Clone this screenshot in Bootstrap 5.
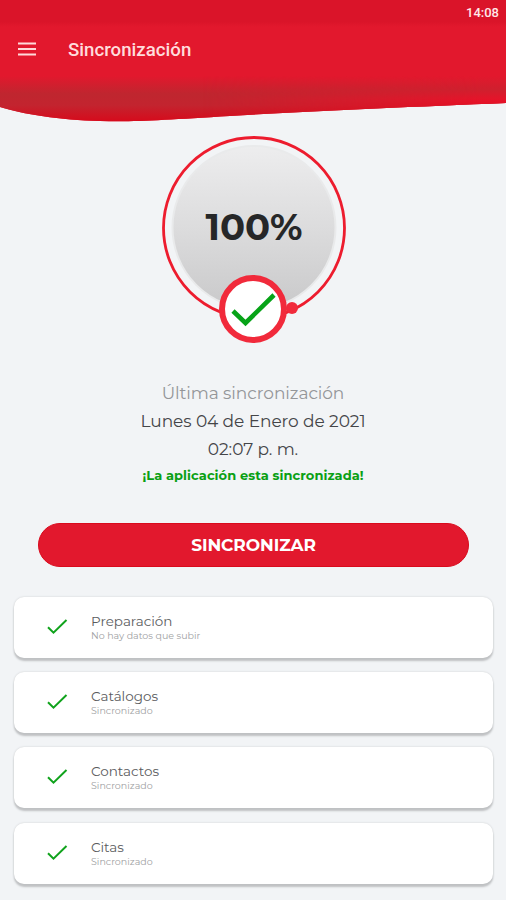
<!DOCTYPE html>
<html lang="es">
<head>
<meta charset="utf-8">
<meta name="viewport" content="width=device-width, initial-scale=1">
<title>Sincronización</title>
<link href="https://cdn.jsdelivr.net/npm/bootstrap@5.3.0/dist/css/bootstrap.min.css" rel="stylesheet">
<style>
  body { background: #f2f4f6; font-family: Montserrat, Inter, "Open Sans", sans-serif; height: 900px; overflow: hidden; }
  .app-header { height: 136px; font-family: Roboto, sans-serif; }
  .header-shape { z-index: 0; }
  .status-bar { height: 24px; padding-right: 7px; padding-top: 1px; font-size: 13px; font-weight: 500; color: #ffe9e9; }
  .app-bar { height: 52px; padding-left: 18px; gap: 32px; }
  .app-title { font-size: 18.7px; font-weight: 500; line-height: 24px; color: #ffdcdc; }
  .menu-icon { margin-top: -2px; }
  .gauge { width: 186px; height: 209px; }
  .gauge-value { top: 67px; left: 1px; font-size: 37px; line-height: 48px; font-weight: 700; color: #262728; letter-spacing: -.1px; }
  .sync-info { margin-top: 34px; font-size: 17px; line-height: 28.2px; color: #444548; letter-spacing: -.07px; }
  .info-label { color: #949699; }
  .info-ok { font-size: 13px; line-height: 22px; font-weight: 700; color: #0aa014; letter-spacing: .06px; }
  .btn-sync { margin: 37px 37px 0 38px; height: 44px; padding: 8px 0 6px; font-size: 17px; line-height: 1; font-weight: 700; color: #fff; background: #e2182d; border: 1px solid #d90a1c; letter-spacing: -.08px; }
  .task-list { margin: 30px 13px 0 14px; gap: 14.4px; }
  .task { height: 61px; border-radius: 10px; background: #fff; padding-left: 31px; box-shadow: 0 3px 2px #bfc1c3, 0 0 2px #c9cbcd; }
  .task-icon { margin-right: 22px; margin-top: -1px; }
  .task-name { font-size: 13.5px; line-height: 16px; color: #5b5c5e; }
  .task-state { font-size: 9.5px; line-height: 13px; color: #a0a1a3; }
</style>
</head>
<body class="d-flex flex-column">
<header class="app-header position-relative flex-shrink-0">
  <svg class="header-shape position-absolute top-0 start-0" width="506" height="130" viewBox="0 0 506 130" aria-hidden="true">
    <defs>
      <linearGradient id="top" x1="0" y1="0" x2="0" y2="1"><stop offset="0" stop-color="#da1429"/><stop offset=".18" stop-color="#da1429"/><stop offset=".22" stop-color="#e2182d"/><stop offset="1" stop-color="#e2182d"/></linearGradient>
      <linearGradient id="fold" x1="0" y1="76" x2="0" y2="121" gradientUnits="userSpaceOnUse"><stop offset="0" stop-color="#e2182d"/><stop offset=".4" stop-color="#bf262f"/><stop offset=".65" stop-color="#c3242f"/><stop offset="1" stop-color="#d60b1c"/></linearGradient>
      <linearGradient id="foldRight" x1="0" y1="76" x2="0" y2="110" gradientUnits="userSpaceOnUse"><stop offset="0" stop-color="#e2182d"/><stop offset=".4" stop-color="#cf202e"/><stop offset=".68" stop-color="#e5142a"/><stop offset="1" stop-color="#e20c20"/></linearGradient>
      <linearGradient id="side" x1="0" y1="0" x2="1" y2="0"><stop offset=".4" stop-color="#fff" stop-opacity="0"/><stop offset=".95" stop-color="#fff"/></linearGradient>
      <mask id="fade"><rect width="506" height="130" fill="url(#side)"/></mask>
    </defs>
    <path d="M0 0H506V103C410 107 310 111 230 116C165 120 135 122 100 121C60 120 22 114 0 107Z" fill="url(#top)"/>
    <path d="M0 76H506V103C410 107 310 111 230 116C165 120 135 122 100 121C60 120 22 114 0 107Z" fill="url(#fold)"/>
    <path d="M0 76H506V103C410 107 310 111 230 116C165 120 135 122 100 121C60 120 22 114 0 107Z" fill="url(#foldRight)" mask="url(#fade)"/>
  </svg>
  <div class="status-bar position-relative d-flex justify-content-end align-items-center">14:08</div>
  <nav class="app-bar position-relative d-flex align-items-center">
    <svg class="menu-icon" width="18" height="14" viewBox="0 0 18 14" aria-label="Menú"><path d="M0 1.500H18M0 7H18M0 12.500H18" stroke="#ffd9da" stroke-width="2"/></svg>
    <h1 class="app-title mb-0">Sincronización</h1>
  </nav>
</header>

<main class="d-flex flex-column">
  <section class="gauge position-relative mx-auto">
    <svg width="186" height="209" viewBox="0 0 186 209" aria-hidden="true">
      <defs><linearGradient id="disc" x1="0" y1="0" x2="0" y2="1"><stop offset="0" stop-color="#ededee"/><stop offset=".5" stop-color="#dcdcdd"/><stop offset="1" stop-color="#c9c9ca"/></linearGradient></defs>
      <circle cx="94" cy="91.500" r="81.500" fill="url(#disc)" stroke="#e9eaeb" stroke-width="2"/>
      <circle cx="94" cy="92" r="90.500" fill="none" stroke="#ed1c2e" stroke-width="2.800"/>
      <circle cx="132" cy="172" r="6" fill="#f12a3b"/>
      <circle cx="93" cy="173" r="31" fill="#fff" stroke="#f12a3b" stroke-width="6"/>
      <path d="M73 175L85.500 187L114 159" fill="none" stroke="#07a318" stroke-width="4.600"/>
    </svg>
    <div class="gauge-value position-absolute w-100 text-center">100%</div>
  </section>

  <section class="sync-info text-center">
    <div class="info-label">Última sincronización</div>
    <div>Lunes 04 de Enero de 2021</div>
    <div>02:07 p. m.</div>
    <div class="info-ok">¡La aplicación esta sincronizada!</div>
  </section>

  <button type="button" class="btn btn-sync rounded-pill">SINCRONIZAR</button>

  <section class="task-list d-flex flex-column">
    <div class="task d-flex align-items-center">
      <svg class="task-icon" width="24" height="18" viewBox="0 0 24 18" aria-hidden="true"><path d="M3 9.200L8.500 14.600L21.500 2" fill="none" stroke="#10a31c" stroke-width="2"/></svg>
      <div><div class="task-name">Preparación</div><div class="task-state">No hay datos que subir</div></div>
    </div>
    <div class="task d-flex align-items-center">
      <svg class="task-icon" width="24" height="18" viewBox="0 0 24 18" aria-hidden="true"><path d="M3 9.200L8.500 14.600L21.500 2" fill="none" stroke="#10a31c" stroke-width="2"/></svg>
      <div><div class="task-name">Catálogos</div><div class="task-state">Sincronizado</div></div>
    </div>
    <div class="task d-flex align-items-center">
      <svg class="task-icon" width="24" height="18" viewBox="0 0 24 18" aria-hidden="true"><path d="M3 9.200L8.500 14.600L21.500 2" fill="none" stroke="#10a31c" stroke-width="2"/></svg>
      <div><div class="task-name">Contactos</div><div class="task-state">Sincronizado</div></div>
    </div>
    <div class="task d-flex align-items-center">
      <svg class="task-icon" width="24" height="18" viewBox="0 0 24 18" aria-hidden="true"><path d="M3 9.200L8.500 14.600L21.500 2" fill="none" stroke="#10a31c" stroke-width="2"/></svg>
      <div><div class="task-name">Citas</div><div class="task-state">Sincronizado</div></div>
    </div>
  </section>
</main>
<script src="https://cdn.jsdelivr.net/npm/bootstrap@5.3.0/dist/js/bootstrap.bundle.min.js"></script>
</body>
</html>
